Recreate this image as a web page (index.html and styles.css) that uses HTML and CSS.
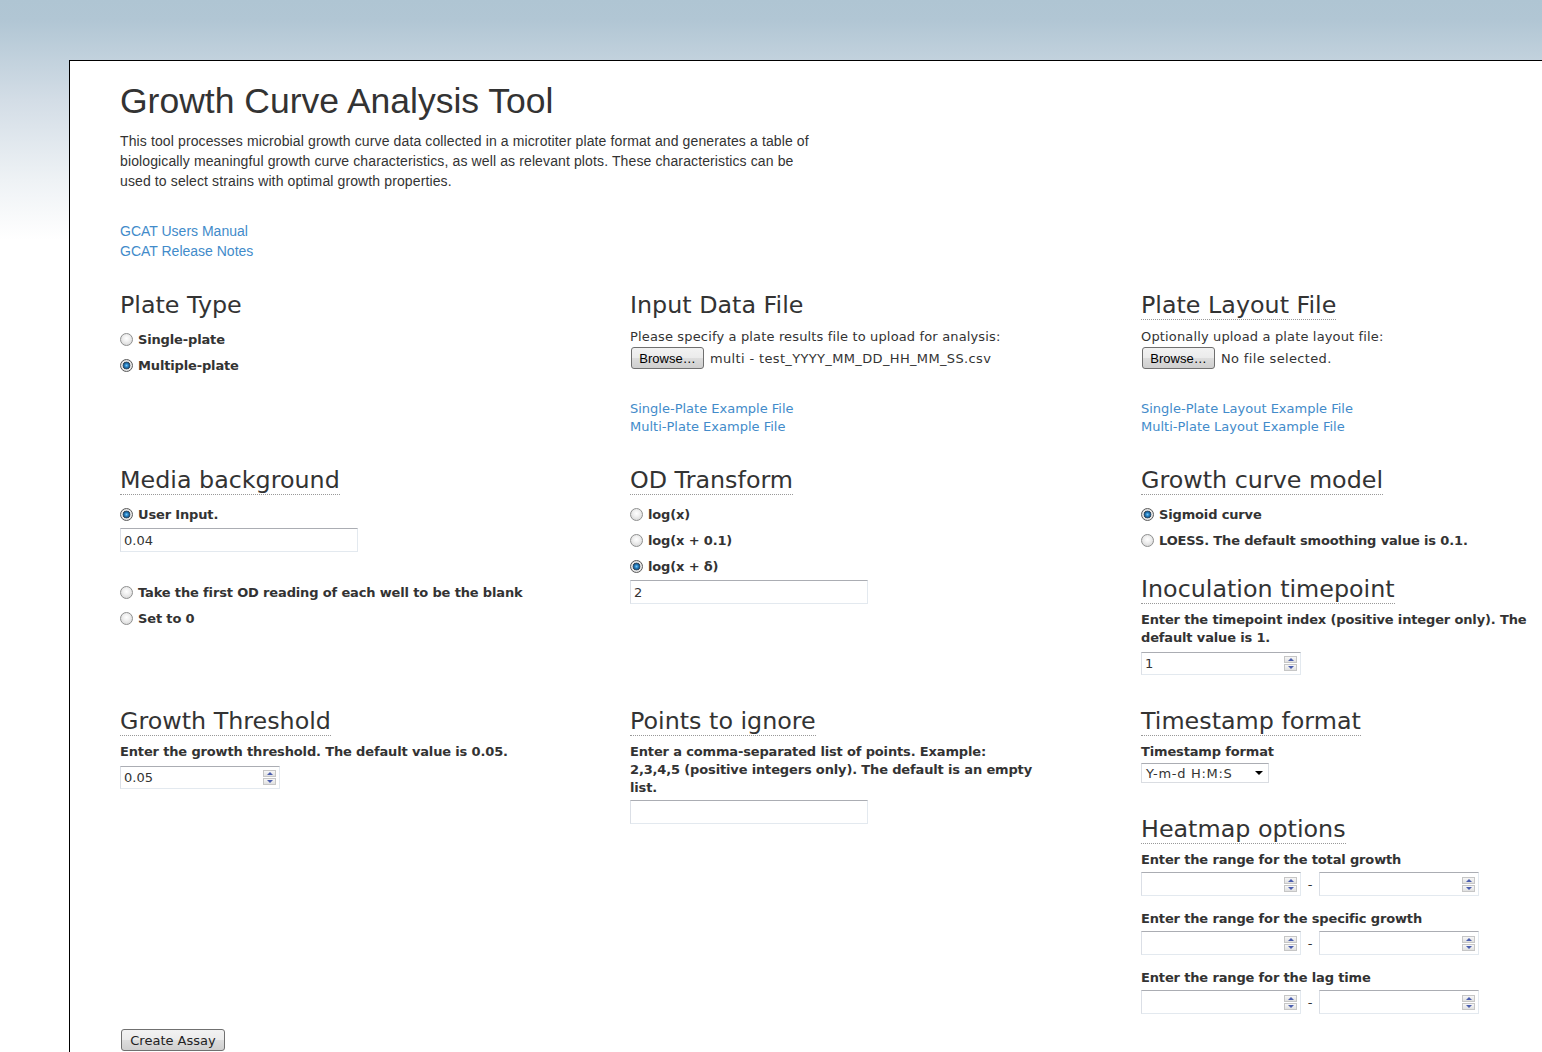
FILE: index.html
```html
<!DOCTYPE html>
<html>
<head>
<meta charset="utf-8">
<title>Growth Curve Analysis Tool</title>
<link rel="stylesheet" href="styles.css">
</head>
<body>
<div class="page">
  <h1 class="title">Growth Curve Analysis Tool</h1>
  <p class="intro">This tool processes microbial growth curve data collected in a microtiter plate format and generates a table of biologically meaningful growth curve characteristics, as well as relevant plots. These characteristics can be used to select strains with optimal growth properties.</p>
  <div class="doclinks">
    <a href="#">GCAT Users Manual</a>
    <a href="#">GCAT Release Notes</a>
  </div>

  <div class="row first">
    <section class="col">
      <h2><span>Plate Type</span></h2>
      <label class="radio"><input type="radio" name="plate"><span>Single-plate</span></label>
      <label class="radio"><input type="radio" name="plate" checked><span>Multiple-plate</span></label>
    </section>
    <section class="col">
      <h2><span>Input Data File</span></h2>
      <p class="text">Please specify a plate results file to upload for analysis:</p>
      <div class="file"><button class="btn browse" type="button">Browse…</button><span class="fname">multi - test_YYYY_MM_DD_HH_MM_SS.csv</span></div>
      <div class="links">
        <a href="#">Single-Plate Example File</a>
        <a href="#">Multi-Plate Example File</a>
      </div>
    </section>
    <section class="col">
      <h2><span class="abbr">Plate Layout File</span></h2>
      <p class="text">Optionally upload a plate layout file:</p>
      <div class="file"><button class="btn browse" type="button">Browse…</button><span class="fname">No file selected.</span></div>
      <div class="links">
        <a href="#">Single-Plate Layout Example File</a>
        <a href="#">Multi-Plate Layout Example File</a>
      </div>
    </section>
  </div>

  <div class="row second">
    <section class="col">
      <h2><span class="abbr">Media background</span></h2>
      <label class="radio"><input type="radio" name="media" checked><span>User Input.</span></label>
      <input class="field" type="text" value="0.04">
      <label class="radio gap"><input type="radio" name="media"><span>Take the first OD reading of each well to be the blank</span></label>
      <label class="radio"><input type="radio" name="media"><span>Set to 0</span></label>
    </section>
    <section class="col">
      <h2><span class="abbr">OD Transform</span></h2>
      <label class="radio"><input type="radio" name="od"><span>log(x)</span></label>
      <label class="radio"><input type="radio" name="od"><span>log(x + 0.1)</span></label>
      <label class="radio"><input type="radio" name="od" checked><span>log(x + δ)</span></label>
      <input class="field" type="text" value="2">
    </section>
    <section class="col">
      <h2><span class="abbr">Growth curve model</span></h2>
      <label class="radio"><input type="radio" name="model" checked><span>Sigmoid curve</span></label>
      <label class="radio"><input type="radio" name="model"><span>LOESS. The default smoothing value is 0.1.</span></label>
      <h2 class="sub"><span class="abbr">Inoculation timepoint</span></h2>
      <p class="label">Enter the timepoint index (positive integer only). The default value is 1.</p>
      <div class="num"><input type="text" value="1"><span class="spin"><i class="up"></i><i class="down"></i></span></div>
    </section>
  </div>

  <div class="row third">
    <section class="col">
      <h2><span class="abbr">Growth Threshold</span></h2>
      <p class="label">Enter the growth threshold. The default value is 0.05.</p>
      <div class="num"><input type="text" value="0.05"><span class="spin"><i class="up"></i><i class="down"></i></span></div>
    </section>
    <section class="col">
      <h2><span class="abbr">Points to ignore</span></h2>
      <p class="label narrow">Enter a comma-separated list of points. Example: 2,3,4,5 (positive integers only). The default is an empty list.</p>
      <input class="field after-label" type="text" value="">
    </section>
    <section class="col">
      <h2><span class="abbr">Timestamp format</span></h2>
      <p class="label">Timestamp format</p>
      <div class="select"><span>Y-m-d H:M:S</span><i class="caret"></i></div>
      <h2 class="heat"><span class="abbr">Heatmap options</span></h2>
      <p class="label">Enter the range for the total growth</p>
      <div class="range">
        <div class="num"><input type="text" value=""><span class="spin"><i class="up"></i><i class="down"></i></span></div>
        <span class="dash">-</span>
        <div class="num"><input type="text" value=""><span class="spin"><i class="up"></i><i class="down"></i></span></div>
      </div>
      <p class="label spaced">Enter the range for the specific growth</p>
      <div class="range">
        <div class="num"><input type="text" value=""><span class="spin"><i class="up"></i><i class="down"></i></span></div>
        <span class="dash">-</span>
        <div class="num"><input type="text" value=""><span class="spin"><i class="up"></i><i class="down"></i></span></div>
      </div>
      <p class="label spaced">Enter the range for the lag time</p>
      <div class="range">
        <div class="num"><input type="text" value=""><span class="spin"><i class="up"></i><i class="down"></i></span></div>
        <span class="dash">-</span>
        <div class="num"><input type="text" value=""><span class="spin"><i class="up"></i><i class="down"></i></span></div>
      </div>
    </section>
  </div>

  <div class="submit"><button class="btn create" type="button">Create Assay</button></div>
</div>
</body>
</html>
```

FILE: styles.css
```css
html {
  background: #ffffff;
}

body {
  margin: 0;
  overflow: hidden;
  background: linear-gradient(to bottom, #afc5d3 0px, #b1c6d4 20px, #d3dde6 100px, #eef2f5 180px, #ffffff 240px) no-repeat;
  background-size: 100% 240px;
  font-family: "DejaVu Sans", Verdana, sans-serif;
  font-size: 13px;
  color: #333333;
}

.page {
  margin: 60px 0 0 69px;
  border-top: 1px solid #000;
  border-left: 1px solid #000;
  background: #ffffff;
  padding: 20px 0 0 50px;
  min-height: 1100px;
}

.title {
  margin: 0;
  font-family: "Liberation Sans", Arial, sans-serif;
  font-weight: normal;
  font-size: 35.5px;
  line-height: 40px;
  color: #333;
}

.intro {
  margin: 10px 0 0;
  width: 700px;
  font-family: "Liberation Sans", Arial, sans-serif;
  font-size: 14px;
  line-height: 20px;
  letter-spacing: 0.12px;
  color: #333;
}

.doclinks {
  margin-top: 30px;
  display: flex;
  flex-direction: column;
  font-family: "Liberation Sans", Arial, sans-serif;
  font-size: 14px;
  line-height: 20px;
}

a {
  color: #428bca;
  text-decoration: none;
}

.row {
  display: grid;
  grid-template-columns: 510px 511px 420px;
  align-items: start;
}

.row.first {
  margin-top: 29px;
}

.row.second {
  margin-top: 29px;
}

.row.third {
  margin-top: 31px;
}

.col {
  width: 415px;
  display: flex;
  flex-direction: column;
  align-items: flex-start;
}

h2 {
  margin: 0 0 6px;
  font-weight: normal;
  font-size: 23.8px;
  line-height: 30px;
  color: #333;
}

h2 .abbr {
  border-bottom: 1px dotted #999;
}

h2.sub {
  margin-top: 21px;
}

h2.heat {
  margin-top: 31px;
}

.text {
  margin: 2px 0 0;
  line-height: 18px;
  letter-spacing: 0.15px;
}

.label {
  margin: 1px 0 0;
  line-height: 18px;
  font-weight: bold;
  letter-spacing: -0.15px;
}

.label.narrow {
  width: 404px;
}

.label.spaced {
  margin-top: 14px;
}

.radio {
  display: flex;
  align-items: center;
  height: 26px;
  font-weight: bold;
  letter-spacing: -0.15px;
}

.radio.gap {
  margin-top: 27px;
}

.radio input {
  appearance: none;
  -webkit-appearance: none;
  width: 13px;
  height: 13px;
  margin: 0 5px 0 0;
  border-radius: 50%;
  border: 1px solid #8e8f8f;
  background: radial-gradient(circle at 50% 40%, #ffffff 0, #f1f1f1 35%, #cfcfcf 100%);
  box-sizing: border-box;
}

.radio input:checked {
  border-color: #5b5b5b;
  background: radial-gradient(circle at 50% 50%, #7cc9f4 0, #2a86c8 1.6px, #1a5a8e 2.8px, #3f4b57 3.6px, #e9e9e9 4.2px, #cdcdcd 100%);
}

.field {
  display: block;
  margin: 1px 0 0;
  width: 238px;
  height: 24px;
  box-sizing: border-box;
  padding: 0 3px;
  border: 1px solid #e3e9ef;
  border-top-color: #abadb3;
  border-left-color: #dbdfe6;
  font-family: "DejaVu Sans", Verdana, sans-serif;
  font-size: 13px;
  color: #333;
  outline: none;
  background: #fff;
}

.field.after-label {
  margin-top: 3px;
}

.file {
  display: flex;
  align-items: center;
  height: 24px;
  gap: 6px;
}

.fname {
  letter-spacing: 0.35px;
}

.btn {
  height: 22px;
  box-sizing: border-box;
  border: 1px solid #707070;
  border-radius: 3px;
  background: linear-gradient(to bottom, #f2f2f2 0%, #ebebeb 50%, #dddddd 50%, #cfcfcf 100%);
  color: #000;
  padding: 0;
  cursor: default;
}

.browse {
  width: 73px;
  margin-left: 1px;
  font-family: "Liberation Sans", Arial, sans-serif;
  font-size: 13px;
}

.links {
  margin-top: 30px;
  display: flex;
  flex-direction: column;
  line-height: 18px;
}

.num {
  display: flex;
  align-items: center;
  width: 160px;
  height: 23px;
  box-sizing: border-box;
  margin-top: 5px;
  border: 1px solid #e3e9ef;
  border-top-color: #abadb3;
  border-left-color: #dbdfe6;
  background: #fff;
}

.num input {
  flex: 1;
  min-width: 0;
  border: 0;
  outline: none;
  padding: 0 3px;
  font-family: "DejaVu Sans", Verdana, sans-serif;
  font-size: 13px;
  color: #333;
  background: transparent;
}

.spin {
  display: flex;
  flex-direction: column;
  gap: 1px;
  margin-right: 3px;
}

.spin i {
  display: flex;
  align-items: center;
  justify-content: center;
  width: 13px;
  height: 7px;
  box-sizing: border-box;
  border: 1px solid #c6c6c6;
  background: linear-gradient(to bottom, #f7f7f7, #e0e0e0);
}

.spin i::before {
  content: "";
  width: 0;
  height: 0;
  border-left: 3px solid transparent;
  border-right: 3px solid transparent;
}

.spin .up::before {
  border-bottom: 3px solid #4b5eae;
}

.spin .down::before {
  border-top: 3px solid #4b5eae;
}

.range {
  display: flex;
  align-items: center;
  margin-top: 3px;
}

.range .num {
  margin-top: 0;
  height: 24px;
}

.dash {
  width: 18px;
  text-align: center;
}

.select {
  display: flex;
  align-items: center;
  justify-content: space-between;
  margin-top: 2px;
  width: 128px;
  height: 20px;
  box-sizing: border-box;
  padding: 0 4px 0 4px;
  border: 1px solid #dadde2;
  border-top-color: #abadb3;
  background: #fff;
  letter-spacing: 0.7px;
}

.caret {
  width: 0;
  height: 0;
  border-left: 4px solid transparent;
  border-right: 4px solid transparent;
  border-top: 4px solid #000;
  margin-right: 1px;
}

.submit {
  margin-top: 15px;
}

.create {
  width: 104px;
  margin-left: 1px;
  font-family: "DejaVu Sans", Verdana, sans-serif;
  font-size: 13px;
  color: #222;
}
```
